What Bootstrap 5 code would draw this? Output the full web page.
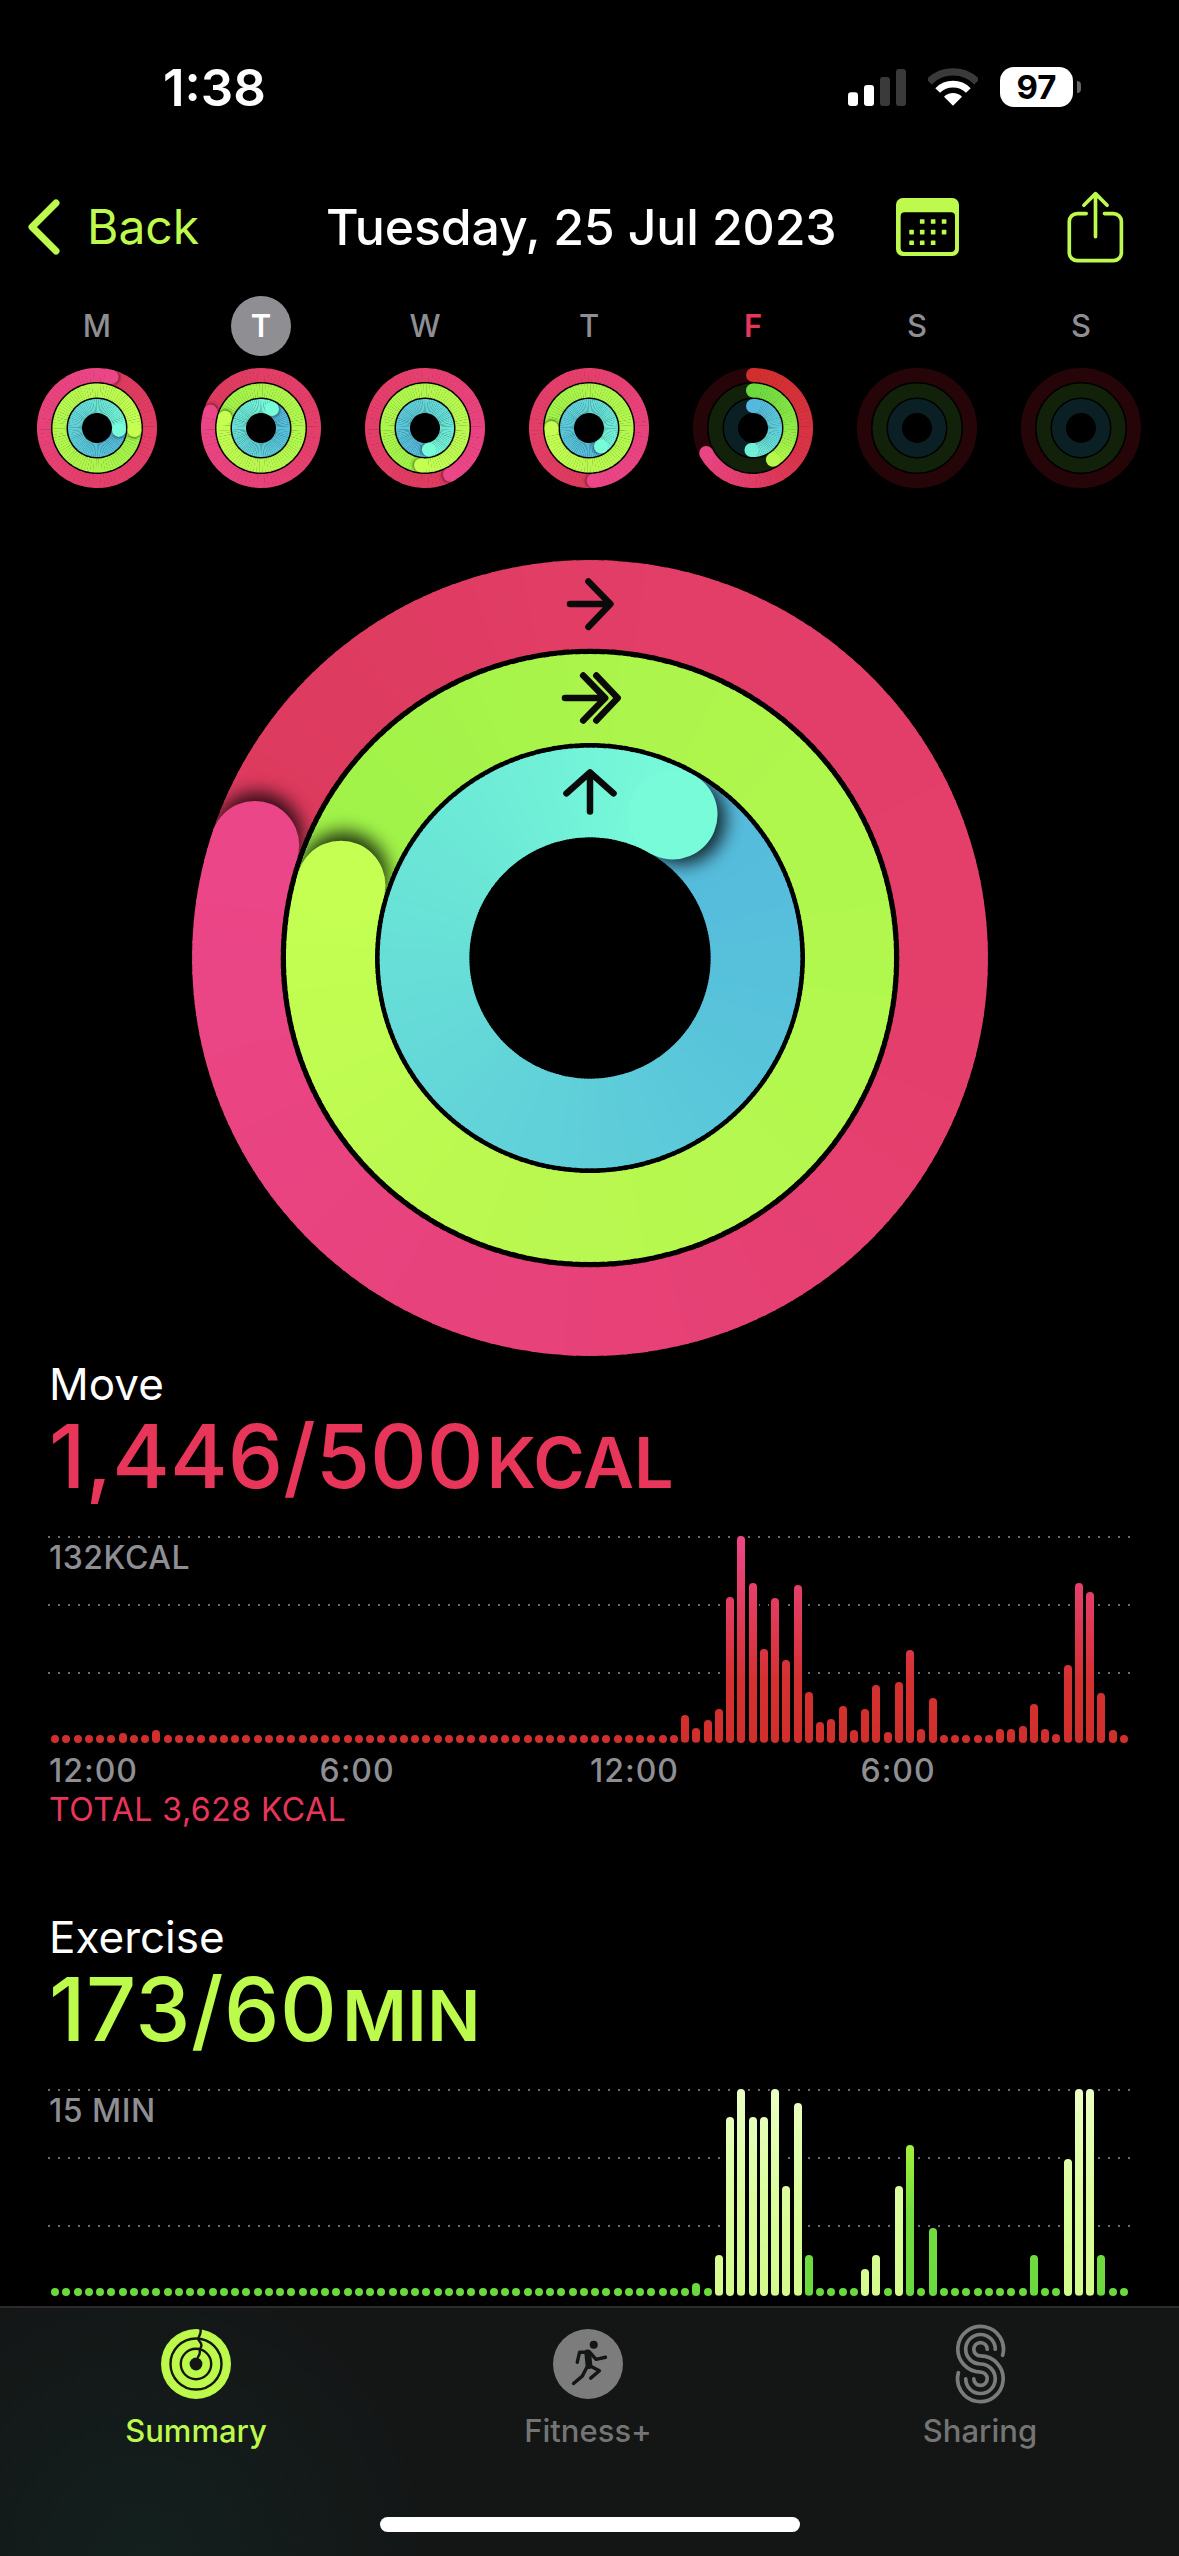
<!DOCTYPE html>
<html lang="en">
  <head>
    <meta charset="UTF-8" />
    <meta name="viewport" content="width=device-width, initial-scale=1.0" />
    <title>Activity</title>
    <link href="https://cdn.jsdelivr.net/npm/bootstrap@5.3.2/dist/css/bootstrap.min.css" rel="stylesheet" />
    <style>
      html, body { height: 2556px; }
      body {
        width: 1179px;
        background: #000;
        color: #fff;
        font-family: Inter, "Liberation Sans", sans-serif;
        overflow: hidden;
      }
      .screen { height: 2556px; }
      .stat-row { height: 176px; padding-right: 98px; padding-left: 163px; }
      .clock { margin-top: 63px; font-size: 51px; line-height: 50px; font-weight: 600; letter-spacing: 0; }
      .stat-icons { margin-top: 67px; gap: 22px; }
      .batt { width: 73px; height: 40px; border-radius: 14px; background: #fff; color: #000; font-size: 33px; line-height: 40px; font-weight: 700; text-align: center; }
      .batt-tip { width: 4px; height: 12px; margin-left: 4px; border-radius: 0 6px 6px 0; background: #666; }

      .top-row { height: 102px; padding-left: 28px; }
      .back-link { width: 298px; gap: 23px; color: #bef94e; font-size: 48px; }
      .day-title { width: 570px; font-size: 50px; font-weight: 500; letter-spacing: -0.15px; }
      .share-btn { margin-left: 107px; }

      .week-row { padding: 18px 0 0 15px; }
      .week-col { width: 164px; }
      .week-letter { width: 60px; height: 60px; border-radius: 50%; margin-bottom: 12px; color: #8e8e93; font-size: 31px; font-weight: 500; }
      .week-letter.is-today { background: #8e8e93; color: #fff; font-weight: 600; }
      .week-letter.is-open { color: #e8365a; font-weight: 600; }

      .big-rings { margin-top: 72px; }
      .metric { padding-left: 49px; }
      .metric-name { margin-top: 4px; font-size: 44px; line-height: 48px; }
      .metric-val { height: 88px; margin-top: 4px; font-size: 88px; line-height: 88px; font-weight: 500; white-space: nowrap; }
      .metric-val span { font-size: 70px; line-height: 1; font-weight: 600; margin-left: 3px; }
      .tone-move { color: #e8365a; }
      .tone-ex { color: #bcfb4b; }
      .metric-val.tone-ex { letter-spacing: .5px; }
      .metric-val.tone-ex span { margin-left: 5px; }
      .chart-box { position: relative; width: 1082px; height: 207px; margin: 36px 0 0 -1px; }
      .grid-dots { position: absolute; left: 0; right: 0; height: 2px; background: repeating-linear-gradient(90deg, #6d6d6d 0 2.4px, transparent 2.4px 10px); }
      .chart-max { position: absolute; left: 1px; top: 4px; color: #8e8e93; font-size: 32px; line-height: 36px; font-weight: 500; letter-spacing: .5px; }
      .bar-row { position: absolute; left: 3px; bottom: 0; display: flex; align-items: flex-end; gap: 3.25px; }
      .tick { width: 8px; border-radius: 4px; box-shadow: 0 0 0 2px #000; background-size: 100% 207px; background-position: bottom; }
      .tick-move { background-image: linear-gradient(to top, #d02f2c, #d5302f 30%, #e13c5d 65%, #ee4688); }
      .tick-green { background-image: linear-gradient(to top, #6ad93e, #75dd3e 40%, #a5f23a 75%, #b8f84c); }
      .tick-pale { background-image: linear-gradient(to top, #d4fb8c, #dcfd9e 50%, #ebffc4); }
      .time-row { display: grid; grid-template-columns: repeat(4, 270.5px); margin-top: 10px; color: #8e8e93; font-size: 32px; line-height: 36px; font-weight: 500; letter-spacing: 1px; }
      .day-total { margin-top: 3px; font-size: 32px; line-height: 36px; letter-spacing: .5px; }
      .metric-gap { margin-top: 85px; }

      .tab-bar {
        height: 250px;
        padding-top: 15px;
        border-top: 2px solid #2b2b2b;
        background: radial-gradient(circle at 12% 100%, #13201e 0, rgba(20, 21, 21, 0) 320px), #141515;
      }
      .tab-row { width: 1176px; }
      .tab-icon { height: 82px; }
      .tab-text { margin-top: 8px; font-size: 31px; line-height: 36px; font-weight: 500; color: #747474; }
      .tab-text.is-on { color: #bcf94b; }
      .home-bar { width: 420px; height: 15px; margin: 68px auto 0; border-radius: 8px; background: #fff; }
    </style>
  </head>
  <body>
    <div class="screen d-flex flex-column">
      <main class="flex-grow-1 overflow-hidden">
        <!-- status bar -->
        <div class="stat-row d-flex justify-content-between align-items-start">
          <div class="clock">1:38</div>
          <div class="stat-icons d-flex align-items-center">
            <svg width="58" height="37" viewBox="18 42 174 111">
              <rect x="18" y="112" width="30" height="41" rx="9" fill="#fff" />
              <rect x="66" y="90" width="30" height="63" rx="9" fill="#fff" />
              <rect x="114" y="66" width="30" height="87" rx="9" fill="#3a3a3a" />
              <rect x="162" y="42" width="30" height="111" rx="9" fill="#3a3a3a" />
            </svg>
            <svg width="50" height="38" viewBox="260 42 150 113">
              <path d="M263 83A102 102 0 0 1 407 83" fill="none" stroke="#3a3a3a" stroke-width="22" />
              <path d="M289 109A65 65 0 0 1 381 109" fill="none" stroke="#fff" stroke-width="20" />
              <path d="M335 155L308 128A38 38 0 0 1 362 128Z" fill="#fff" />
            </svg>
            <div class="d-flex align-items-center">
              <div class="batt">97</div>
              <div class="batt-tip"></div>
            </div>
          </div>
        </div>

        <!-- date header -->
        <div class="top-row d-flex align-items-center">
          <div class="back-link d-flex align-items-center">
            <svg width="36" height="56" viewBox="0 0 36 56">
              <path d="M28 4L4 28L28 52" fill="none" stroke="#bef94e" stroke-width="7" stroke-linecap="round" stroke-linejoin="round" />
            </svg>
            <span>Back</span>
          </div>
          <div class="day-title">Tuesday, 25 Jul 2023</div>
          <svg width="63" height="58" viewBox="168 430 190 175">
            <path fill-rule="evenodd" fill="#bef94e" d="M188 430H338A20 20 0 0 1 358 450V585A20 20 0 0 1 338 605H188A20 20 0 0 1 168 585V450A20 20 0 0 1 188 430ZM194 473A12 12 0 0 0 182 485V581A12 12 0 0 0 194 593H334A12 12 0 0 0 346 581V485A12 12 0 0 0 334 473Z" />
            <g fill="#bef94e">
              <rect x="240" y="494" width="14" height="14" rx="2" /><rect x="273" y="494" width="14" height="14" rx="2" /><rect x="306" y="494" width="14" height="14" rx="2" />
              <rect x="208" y="526" width="14" height="14" rx="2" /><rect x="240" y="526" width="14" height="14" rx="2" /><rect x="273" y="526" width="14" height="14" rx="2" /><rect x="306" y="526" width="14" height="14" rx="2" />
              <rect x="208" y="558" width="14" height="14" rx="2" /><rect x="240" y="558" width="14" height="14" rx="2" /><rect x="273" y="558" width="14" height="14" rx="2" />
            </g>
          </svg>
          <svg class="share-btn" width="59" height="73" viewBox="675 400 176 220">
            <g fill="none" stroke="#bef94e" stroke-width="11" stroke-linecap="round" stroke-linejoin="round">
              <path d="M735 468H708A24 24 0 0 0 684 492V586A24 24 0 0 0 708 610H817A24 24 0 0 0 841 586V492A24 24 0 0 0 817 468H790" />
              <path d="M763 538V410M728 443L763 408L798 443" />
            </g>
          </svg>
        </div>

        <!-- week strip -->
        <div class="week-row d-flex" id="week-row"></div>

        <!-- today's rings -->
        <div class="big-rings d-flex justify-content-center" id="big-rings"></div>

        <!-- move -->
        <section class="metric">
          <div class="metric-name">Move</div>
          <div class="metric-val tone-move">1,446/500<span>KCAL</span></div>
          <div class="chart-box" id="move-chart">
            <div class="grid-dots" style="top: 0"></div>
            <div class="grid-dots" style="top: 68px"></div>
            <div class="grid-dots" style="top: 136px"></div>
            <div class="chart-max">132KCAL</div>
          </div>
          <div class="time-row"><span>12:00</span><span>6:00</span><span>12:00</span><span>6:00</span></div>
          <div class="day-total tone-move">TOTAL 3,628 KCAL</div>
        </section>

        <!-- exercise -->
        <section class="metric metric-gap">
          <div class="metric-name">Exercise</div>
          <div class="metric-val tone-ex">173/60<span>MIN</span></div>
          <div class="chart-box" id="ex-chart">
            <div class="grid-dots" style="top: 0"></div>
            <div class="grid-dots" style="top: 68px"></div>
            <div class="grid-dots" style="top: 136px"></div>
            <div class="chart-max">15 MIN</div>
          </div>
        </section>
      </main>

      <!-- tabs -->
      <nav class="tab-bar flex-shrink-0">
        <div class="row g-0 text-center tab-row">
          <div class="col-4">
            <div class="tab-icon d-flex align-items-center justify-content-center">
              <svg width="70" height="70" viewBox="-35 -35 70 70">
                <circle r="35" fill="#bcf94b" />
                <g fill="none" stroke="#141515" stroke-width="2.4" stroke-linecap="round">
                  <circle r="25.5" />
                  <circle r="15.2" />
                  <path d="M4.4-35C6-29 1-27 2.6-24C5-21 6.5-19 4.5-16C2-13.5 6-12 2-7" />
                </g>
                <circle r="6.4" fill="#141515" />
              </svg>
            </div>
            <div class="tab-text is-on">Summary</div>
          </div>
          <div class="col-4">
            <div class="tab-icon d-flex align-items-center justify-content-center">
              <svg width="70" height="70" viewBox="69 41 208 208">
                <circle cx="173" cy="145" r="104" fill="#7c7c7c" />
                <circle cx="190" cy="88" r="12" fill="#141515" />
                <g fill="none" stroke="#141515" stroke-linecap="round" stroke-linejoin="round">
                  <path d="M172 112L176 150" stroke-width="20" />
                  <path d="M170 110H148L141 140M178 110L197 131L225 125M172 150L156 181L130 203M178 150L207 165L181 187" stroke-width="10" />
                </g>
              </svg>
            </div>
            <div class="tab-text">Fitness+</div>
          </div>
          <div class="col-4">
            <div class="tab-icon d-flex align-items-center justify-content-center">
              <svg width="53" height="82" viewBox="1275 22 158 244">
                <g fill="none" stroke="#7b7b7b" stroke-width="11" stroke-linecap="round">
                  <path d="M1420 118A68 68 0 1 0 1354 168A20 20 0 1 1 1334 188" />
                  <path d="M1398 100A44 44 0 1 0 1354 144A44 44 0 1 1 1310 188" />
                  <path d="M1374 100A20 20 0 1 0 1354 120A68 68 0 1 1 1288 170" />
                </g>
              </svg>
            </div>
            <div class="tab-text">Sharing</div>
          </div>
        </div>
        <div class="home-bar"></div>
      </nav>
    </div>

    <script src="https://cdn.jsdelivr.net/npm/bootstrap@5.3.2/dist/js/bootstrap.bundle.min.js"></script>
    <script>
      const LAP = {
        move: ["#dc3a5d", "#e33e68", "#e43f6c", "#e8427c", "#eb4688"],
        ex: ["#9ef248", "#adf54c", "#b2f84e", "#baf850", "#c4ff52"],
        stand: ["#55b9dd", "#58c4da", "#62d3d9", "#6ae5d6", "#78fbd9"],
      };
      const PART = {
        move: ["#d12f2e", "#d9344a", "#e94585"],
        ex: ["#6cd93f", "#88e845", "#b8f84c"],
        stand: ["#56b8de", "#5fd0db", "#72f0d6"],
      };
      const TRACK = { move: "#260508", ex: "#12210a", stand: "#0b2024" };
      let uid = 0;

      function hexMix(stops, t) {
        const p = Math.min(t, 0.9999) * (stops.length - 1);
        const i = Math.floor(p);
        const a = parseInt(stops[i].slice(1), 16);
        const b = parseInt(stops[i + 1].slice(1), 16);
        const f = p - i;
        const ch = (s) => Math.round(((a >> s) & 255) * (1 - f) + ((b >> s) & 255) * f);
        return `rgb(${ch(16)},${ch(8)},${ch(0)})`;
      }

      function pt(c, r, deg) {
        const a = (deg * Math.PI) / 180;
        return [c + r * Math.sin(a), c - r * Math.cos(a)];
      }

      function arc(c, r, w, from, to, color) {
        const [x0, y0] = pt(c, r, from);
        const [x1, y1] = pt(c, r, to);
        return `<path d="M${x0.toFixed(2)} ${y0.toFixed(2)}A${r} ${r} 0 0 1 ${x1.toFixed(2)} ${y1.toFixed(2)}" fill="none" stroke="${color}" stroke-width="${w}"/>`;
      }

      // full lap: colour runs clockwise from just ahead of the head, all the way round to it
      function lapRing(c, r, w, head, stops, step) {
        const id = "clip" + uid++;
        const big = w > 40;
        const outer = r + w / 2;
        const inner = r - w / 2;
        let out = `<clipPath id="${id}"><path clip-rule="evenodd" d="M${c - outer} ${c}a${outer} ${outer} 0 1 0 ${outer * 2} 0a${outer} ${outer} 0 1 0 ${-outer * 2} 0ZM${c - inner} ${c}a${inner} ${inner} 0 1 0 ${inner * 2} 0a${inner} ${inner} 0 1 0 ${-inner * 2} 0Z"/></clipPath>`;
        const ahead = 60;
        for (let d = 0; d < ahead; d += step) {
          out += arc(c, r, w, head + d, head + d + step + 0.4, hexMix(stops, d / 360));
        }
        const [sx, sy] = pt(c, r, head + (w * 6) / r);
        out += `<g clip-path="url(#${id})"><circle cx="${sx}" cy="${sy}" r="${w / 2}" fill="#000" opacity="${big ? 0.8 : 0.45}" filter="url(#blur${big ? "big" : "small"})"/></g>`;
        for (let d = ahead; d < 360; d += step) {
          out += arc(c, r, w, head + d, head + d + step + 0.4, hexMix(stops, d / 360));
        }
        const [hx, hy] = pt(c, r, head);
        out += `<circle cx="${hx}" cy="${hy}" r="${w / 2}" fill="${stops[stops.length - 1]}"/>`;
        return out;
      }

      // less than a lap: dim track, then coloured arc from the top to the head
      function partRing(c, r, w, head, stops, track, step) {
        let out = `<circle cx="${c}" cy="${c}" r="${r}" fill="none" stroke="${track}" stroke-width="${w}"/>`;
        if (head === null) return out;
        const [bx, by] = pt(c, r, 0);
        out += `<circle cx="${bx}" cy="${by}" r="${w / 2}" fill="${stops[0]}"/>`;
        for (let d = 0; d < head; d += step) {
          out += arc(c, r, w, d, Math.min(d + step + 0.4, head), hexMix(stops, d / head));
        }
        const [hx, hy] = pt(c, r, head);
        out += `<circle cx="${hx}" cy="${hy}" r="${w / 2}" fill="${stops[stops.length - 1]}"/>`;
        return out;
      }

      const BLURS = `<defs><filter id="blurbig" x="-60%" y="-60%" width="220%" height="220%"><feGaussianBlur stdDeviation="9"/></filter><filter id="blursmall" x="-60%" y="-60%" width="220%" height="220%"><feGaussianBlur stdDeviation="1.5"/></filter></defs>`;

      // week strip
      const days = [
        { l: "M", heads: [16, 93, 95] },
        { l: "T", cls: "is-today", heads: [288, 286, 30] },
        { l: "W", heads: [152, 186, 170] },
        { l: "T", heads: [175, 270, 147] },
        { l: "F", cls: "is-open", part: [242, 148, 184] },
        { l: "S", part: [null, null, null] },
        { l: "S", part: [null, null, null] },
      ];
      const small = [
        { k: "move", r: 53, w: 14 },
        { k: "ex", r: 37.5, w: 14 },
        { k: "stand", r: 22, w: 14 },
      ];
      document.getElementById("week-row").innerHTML =
        days
          .map((day) => {
            const body = small
              .map((s, i) =>
                day.heads
                  ? lapRing(60, s.r, s.w, day.heads[i], LAP[s.k], 4)
                  : partRing(60, s.r, s.w, day.part[i], PART[s.k], TRACK[s.k], 4)
              )
              .join("");
            return `<div class="week-col d-flex flex-column align-items-center">
              <div class="week-letter d-flex align-items-center justify-content-center ${day.cls || ""}">${day.l}</div>
              <svg width="120" height="120" viewBox="0 0 120 120">${body}</svg>
            </div>`;
          })
          .join("") + `<svg width="0" height="0">${BLURS}</svg>`;

      // big rings
      const C = 398;
      const arrows = `<g transform="translate(${C} ${C})" fill="none" stroke="#0a0a0a" stroke-width="6.5" stroke-linecap="round" stroke-linejoin="round">
        <path d="M-20-354H19M-1.6-376.6L20.4-354L-1.6-331" />
        <path d="M-25-260H11M-6.8-282.5L15.2-260L-6.8-237.5M6.3-282.5L27.7-260L6.3-237.5" />
        <path d="M0-146.4V-185M-23.5-164.7L0-185.7L23.5-164.7" />
      </g>`;
      document.getElementById("big-rings").innerHTML = `<svg width="796" height="796" viewBox="0 0 796 796">
        ${lapRing(C, 353.6, 88.6, 288.6, LAP.move, 1.5)}
        ${lapRing(C, 259.5, 89, 286.3, LAP.ex, 1.5)}
        ${lapRing(C, 165.5, 89.6, 30, LAP.stand, 1.5)}
        ${arrows}
      </svg>`;

      // hourly bars, 96 quarter hours from noon
      function fillBars(id, heights, tone) {
        const wrap = document.createElement("div");
        wrap.className = "bar-row";
        for (let i = 0; i < 96; i++) {
          const bar = document.createElement("div");
          bar.className = "tick " + tone(i);
          bar.style.height = (heights[i] || 8) + "px";
          wrap.appendChild(bar);
        }
        document.getElementById(id).appendChild(wrap);
      }

      fillBars(
        "move-chart",
        {
          6: 10, 9: 13, 56: 27.7, 57: 14.7, 58: 22.7, 59: 34, 60: 146.3, 61: 207, 62: 160.3, 63: 93.7,
          64: 145, 65: 82.7, 66: 158.3, 67: 51.3, 68: 20.7, 69: 24.3, 70: 37, 71: 13.3, 72: 33.7, 73: 58.3,
          74: 11.3, 75: 61, 76: 93, 77: 14.3, 78: 45, 84: 14, 85: 13.7, 86: 17, 87: 39.3, 88: 14, 89: 9.3,
          90: 77.7, 91: 160.3, 92: 151, 93: 50.3, 94: 13.3,
        },
        () => "tick-move"
      );

      const pale = [59, 60, 61, 62, 63, 64, 65, 66, 72, 73, 75, 90, 91, 92];
      fillBars(
        "ex-chart",
        {
          57: 13.3, 59: 40.7, 60: 179, 61: 206.7, 62: 179, 63: 179, 64: 206.7, 65: 110, 66: 192.7, 67: 40.7,
          72: 27.3, 73: 40.7, 75: 110, 76: 151.3, 78: 68, 87: 40.7, 90: 137.3, 91: 206.7, 92: 206.7, 93: 40.7,
        },
        (i) => (pale.includes(i) ? "tick-pale" : "tick-green")
      );
    </script>
  </body>
</html>
